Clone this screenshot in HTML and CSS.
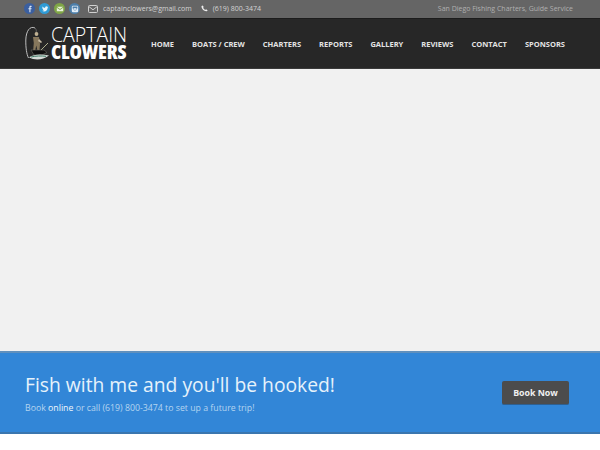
FILE: index.html
```html
<!DOCTYPE html>
<html lang="en">
<head>
<meta charset="utf-8">
<title>Captain Clowers</title>
<link rel="stylesheet" href="styles.css">
</head>
<body>
<div class="topbar">
  <div class="top-left">
    <div class="socials">
      <span class="social fb"><svg viewBox="0 0 10 10" width="10" height="10"><path fill="#dfe8f5" d="M5.6 9V5.4h1.2l.2-1.4H5.6v-.9c0-.4.1-.7.7-.7H7V1.1C6.8 1.1 6.400 1 5.900 1 4.900 1 4.200 1.600 4.200 2.800V4H3v1.400h1.200V9z"/></svg></span>
      <span class="social tw"><svg viewBox="0 0 10 10" width="10" height="10"><path fill="#e6f4fb" d="M9 2.500c-.3.1-.6.200-.9.200.3-.2.600-.5.700-.9-.3.200-.6.300-1 .4a1.600 1.600 0 0 0-2.700 1.400C3.800 3.600 2.600 3 1.800 2c-.4.700-.2 1.600.5 2.100-.3 0-.5-.1-.7-.2 0 .8.500 1.400 1.300 1.600-.2.100-.5.100-.7 0 .2.600.8 1.100 1.500 1.100-.7.500-1.500.8-2.400.7C2 7.800 3 8 3.800 8c3 0 4.600-2.500 4.500-4.700.300-.2.500-.5.700-.8z"/></svg></span>
      <span class="social ml"><svg viewBox="0 0 10 10" width="10" height="10"><path fill="#e9f2dc" d="M1 2.200h8L5 5zM1 3.300v4.500h8V3.300L5 6.100z"/></svg></span>
      <span class="social ig"><svg viewBox="0 0 10 10" width="10" height="10"><path fill="#e2edf7" fill-rule="evenodd" d="M2.500 1h5A1.500 1.500 0 0 1 9 2.500v5A1.500 1.500 0 0 1 7.500 9h-5A1.500 1.500 0 0 1 1 7.500v-5A1.500 1.500 0 0 1 2.500 1zM2 4.500h1.300a1.800 1.800 0 1 0 3.400 0H8V2H2zM5 3.600a1.400 1.400 0 1 1 0 2.800 1.400 1.400 0 0 1 0-2.800z"/></svg></span>
    </div>
    <span class="contact-item">
      <svg class="contact-icon" viewBox="0 0 10 8" width="10" height="8"><rect x=".5" y=".5" width="9" height="7" rx="1" fill="none" stroke="#d0d0d0"/><path d="M.8 1.500 5 4.800l4.200-3.300" fill="none" stroke="#d0d0d0"/></svg>
      captainclowers@gmail.com
    </span>
    <span class="contact-item">
      <svg class="contact-icon phone" viewBox="0 0 9 9" width="7" height="7"><path fill="#eee" d="M2.200.5 3.500 2.600 2.700 3.500c.5 1.100 1.500 2.200 2.800 2.800l.9-.9 2.100 1.400c-.3 1-1.100 1.500-1.900 1.300C3.800 7.800 1.200 5.200.6 2.500.4 1.600 1.100.8 2.200.5z"/></svg>
      (619) 800-3474
    </span>
  </div>
  <div class="tagline">San Diego Fishing Charters, Guide Service</div>
</div>

<header class="header">
  <a class="logo" href="#">
    <svg class="logo-mark" viewBox="0 0 25 35" width="25" height="35">
      <path d="M10 2C5 -.5 1 5 .8 14c-.1 8 .8 14 2.700 18" fill="none" stroke="#cfcfcf" stroke-width=".9"/>
      <path d="M10 2c1.500 1.500 1.500 3 1 5" fill="none" stroke="#8f8f8f" stroke-width=".6"/>
      <circle cx="11.500" cy="8" r="1.900" fill="#bfb092"/>
      <path d="M8 11h6l1 7-.5 6h-2.200l-1-4.500-1 4.500H8.200l.6-7z" fill="#86775c"/>
      <path d="M14 13l3 3-1 1-3-2z" fill="#c7bca5"/>
      <path d="M16 24 23 17" stroke="#aeb08f" fill="none"/>
      <path d="M6 24h13l3 2.500-5 2.500H9z" fill="#0e0e0e" stroke="#77776c" stroke-width=".5"/>
      <path d="M4 31.500c5-3.500 12-3.500 20-2-6 4.500-14 5-20 2z" fill="#d5dcd8"/>
      <path d="M6 31c5-1.200 10-1.200 15-.7" stroke="#3f7a66" fill="none"/>
    </svg>
    <span class="logo-text">
      <span class="logo-top">CAPTAIN</span>
      <span class="logo-bottom">CLOWERS</span>
    </span>
  </a>
  <nav class="nav">
    <a href="#">HOME</a>
    <a href="#">BOATS / CREW</a>
    <a href="#">CHARTERS</a>
    <a href="#">REPORTS</a>
    <a href="#">GALLERY</a>
    <a href="#">REVIEWS</a>
    <a href="#">CONTACT</a>
    <a href="#">SPONSORS</a>
  </nav>
</header>

<main class="hero"></main>

<section class="cta">
  <div class="cta-copy">
    <h2 class="cta-title">Fish with me and you'll be hooked!</h2>
    <p class="cta-sub">Book <a href="#">online</a> or call (619) 800-3474 to set up a future trip!</p>
  </div>
  <a class="cta-btn" href="#">Book Now</a>
</section>
</body>
</html>
```
FILE: styles.css
```css
* { box-sizing: border-box; }
html, body { margin: 0; padding: 0; }
body {
  width: 600px;
  height: 450px;
  overflow: hidden;
  background: #fff;
  font-family: "Open Sans", "Noto Sans", sans-serif;
}
a { text-decoration: none; color: inherit; }

.topbar {
  height: 19px;
  padding: 0 27px 1px 24px;
  display: flex;
  align-items: center;
  justify-content: space-between;
  background: #656565;
  border-bottom: 1px solid #1c1c1c;
  font-size: 7px;
  color: #d4d4d4;
  white-space: nowrap;
}
.top-left { display: flex; align-items: center; }
.socials { display: flex; gap: 4px; margin-right: 8px; }
.social {
  width: 11px;
  height: 11px;
  border-radius: 50%;
  display: flex;
  align-items: center;
  justify-content: center;
}
.social svg { width: 8px; height: 8px; }
.fb { background: #3b5f9f; }
.tw { background: #2f9bd6; }
.ml { background: #7fa546; }
.ig { background: #4c7fab; }
.contact-item { display: flex; align-items: center; margin-right: 9px; }
.contact-icon { margin-right: 5px; }
.phone { margin-right: 5px; }
.tagline { color: #b0b0b0; }

.header {
  height: 50px;
  padding: 0 25px;
  display: flex;
  align-items: center;
  background: #272727;
  border-bottom: 1px solid #3a3a3a;
}
.logo { display: flex; align-items: center; gap: 1px; width: 126px; flex: none; }
.logo-mark { flex: none; }
.logo-text { display: flex; flex-direction: column; color: #fff; white-space: nowrap; }
.logo-top { font-size: 19.500px; font-weight: 300; line-height: 16px; }
.logo-bottom {
  font-size: 20px;
  font-weight: 800;
  line-height: 17px;
  font-stretch: 75%;
  letter-spacing: -.1px;
}
.nav {
  display: flex;
  gap: 18px;
  font-size: 7.500px;
  font-weight: 700;
  color: #e4e4e4;
  white-space: nowrap;
}

.hero { height: 282px; background: #f1f1f1; }

.cta {
  height: 83px;
  padding: 0 31px 0 25px;
  display: flex;
  align-items: center;
  justify-content: space-between;
  background: #3286d7;
  border-top: 2px solid #6090bd;
  border-bottom: 2px solid #3a76ae;
  color: #e6f2fb;
}
.cta-title { margin: 1px 0 0; font-size: 19.300px; font-weight: 400; line-height: 28px; }
.cta-sub { margin: 2px 0 0; font-size: 8.750px; line-height: 14px; color: #b5d5f0; }
.cta-sub a { color: #f0f6fb; }
.cta-btn {
  width: 67px;
  height: 24px;
  margin-top: 1px;
  display: flex;
  align-items: center;
  justify-content: center;
  background: #4c4c4c;
  border-bottom: 1px solid #2f5f8f;
  border-radius: 2px;
  font-size: 8.800px;
  font-weight: 700;
  color: #f0f0f0;
}
```
